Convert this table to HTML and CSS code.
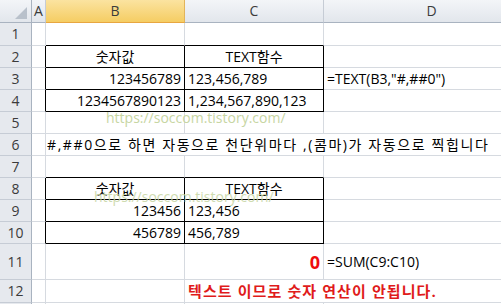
FILE: index.html
```html
<!DOCTYPE html>
<html lang="ko">
<head>
<meta charset="utf-8">
<link rel="stylesheet" href="styles.css">
</head>
<body>
<div class="sheet">
  <div class="corner"></div>
  <div class="h">A</div>
  <div class="h sel">B</div>
  <div class="h">C</div>
  <div class="h">D</div>

  <div class="rh">1</div>
  <div class="c"></div>
  <div class="c bb"></div>
  <div class="c bb"></div>
  <div class="c"></div>

  <div class="rh">2</div>
  <div class="c br"></div>
  <div class="c bb br ctr">숫자값</div>
  <div class="c bb br ctr">TEXT함수</div>
  <div class="c"></div>

  <div class="rh">3</div>
  <div class="c br"></div>
  <div class="c bb br r">123456789</div>
  <div class="c bb br">123,456,789</div>
  <div class="c">=TEXT(B3,"#,##0")</div>

  <div class="rh">4</div>
  <div class="c br"></div>
  <div class="c bb br r">1234567890123</div>
  <div class="c bb br">1,234,567,890,123</div>
  <div class="c"></div>

  <div class="rh">5</div>
  <div class="c"></div>
  <div class="c"></div>
  <div class="c"></div>
  <div class="c"></div>

  <div class="rh">6</div>
  <div class="c"></div>
  <div class="c span3 note">#,##0으로 하면 자동으로 천단위마다 ,(콤마)가 자동으로 찍힙니다</div>

  <div class="rh">7</div>
  <div class="c"></div>
  <div class="c bb"></div>
  <div class="c bb"></div>
  <div class="c"></div>

  <div class="rh">8</div>
  <div class="c br"></div>
  <div class="c bb br ctr">숫자값</div>
  <div class="c bb br ctr">TEXT함수</div>
  <div class="c"></div>

  <div class="rh">9</div>
  <div class="c br"></div>
  <div class="c bb br r">123456</div>
  <div class="c bb br">123,456</div>
  <div class="c"></div>

  <div class="rh">10</div>
  <div class="c br"></div>
  <div class="c bb br r">456789</div>
  <div class="c bb br">456,789</div>
  <div class="c"></div>

  <div class="rh">11</div>
  <div class="c"></div>
  <div class="c"></div>
  <div class="c r"><span class="zero">0</span></div>
  <div class="c">=SUM(C9:C10)</div>

  <div class="rh">12</div>
  <div class="c"></div>
  <div class="c"></div>
  <div class="c span2 warn">텍스트 이므로 숫자 연산이 안됩니다.</div>

  <div class="rh"></div>
  <div class="c"></div>
  <div class="c"></div>
  <div class="c"></div>
  <div class="c"></div>

  <div class="wm wm1">https://soccom.tistory.com/</div>
  <div class="wm wm2">https://soccom.tistory.com/</div>
</div>
</body>
</html>
```

FILE: styles.css
```css
html, body {
  margin: 0;
  padding: 0;
  background: #ffffff;
  overflow: hidden;
}

body {
  font-family: "Open Sans", "Noto Sans CJK KR", sans-serif;
  font-size: 14px;
  color: #000000;
}

.sheet {
  position: relative;
  display: grid;
  width: 540px;
  grid-template-columns: 32px 14px 139px 139px 1fr;
  grid-template-rows: 23px 23px repeat(9, 22px) 36px 23px 22px;
}

.sheet > div {
  box-sizing: border-box;
}

.c {
  display: flex;
  align-items: center;
  padding: 0 3px;
  white-space: nowrap;
  min-width: 0;
  line-height: 20px;
  border-right: 1px solid #d6dae0;
  border-bottom: 1px solid #d6dae0;
}

.r { justify-content: flex-end; }
.ctr { justify-content: center; }
.bb { border-bottom-color: #000000; }
.br { border-right-color: #000000; }
.span3 { grid-column: span 3; padding-left: 1px; }
.span2 { grid-column: span 2; }

.note {
  letter-spacing: 1.6px;
}

.h {
  display: flex;
  align-items: center;
  justify-content: center;
  color: #3b3b3b;
  background: linear-gradient(#f3f5f8, #e2e6ec);
  border-right: 1px solid #c6ccd5;
  border-bottom: 1px solid #a9b3c0;
  line-height: 20px;
}

.h.sel {
  background: linear-gradient(#fbe3a0, #f5cd63);
  border-bottom-color: #e8a640;
  border-right-color: #e2b45a;
}

.corner {
  position: relative;
  background: linear-gradient(#f3f5f8, #e2e6ec);
  border-right: 1px solid #a9b3c0;
  border-bottom: 1px solid #a9b3c0;
}

.corner::after {
  content: "";
  position: absolute;
  right: 4px;
  bottom: 3px;
  width: 0;
  height: 0;
  border-left: 12px solid transparent;
  border-bottom: 12px solid #b9c1cb;
}

.rh {
  display: flex;
  align-items: center;
  justify-content: center;
  color: #3b3b3b;
  background: #e6e9ee;
  border-right: 1px solid #a9b3c0;
  border-bottom: 1px solid #c6ccd5;
  line-height: 20px;
}

.zero {
  color: #ee0d0d;
  font-weight: 700;
  font-size: 18px;
}

.warn {
  color: #e01b1b;
  font-weight: 700;
  font-size: 15px;
  letter-spacing: 1.1px;
}

.wm {
  position: absolute;
  font-family: "Open Sans", sans-serif;
  font-size: 14px;
  line-height: 18px;
  color: #c7d6a3;
  white-space: nowrap;
  pointer-events: none;
}

.wm1 { left: 106px; top: 109px; }
.wm2 { left: 94px; top: 188px; opacity: 0.85; }
```
